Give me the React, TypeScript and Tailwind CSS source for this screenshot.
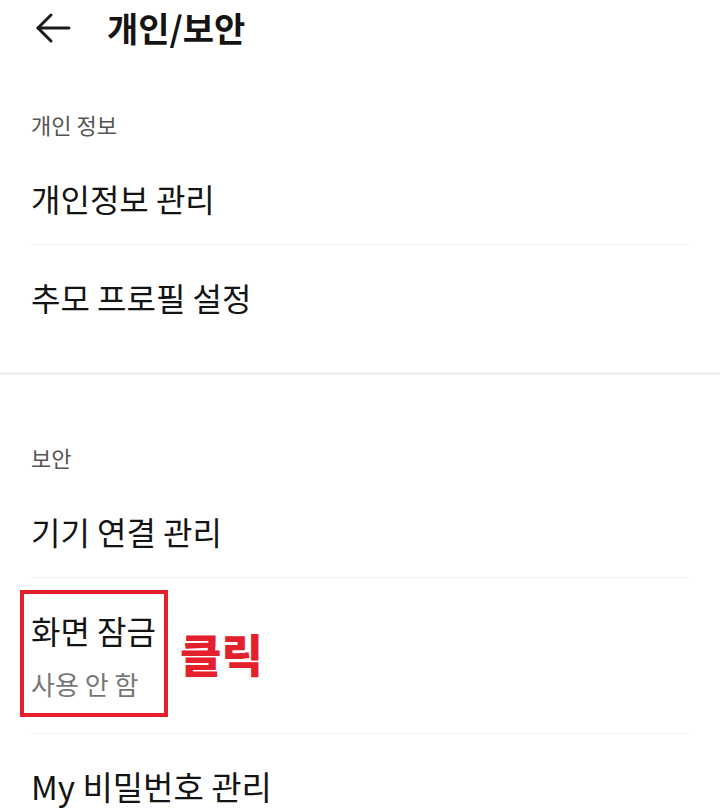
import React from 'react';

const font = { fontFamily: '"Noto Sans CJK KR", "Noto Sans", sans-serif' };

const BackArrow = () => (
  <svg width="36" height="32" viewBox="0 0 36 32" fill="none" stroke="#1a1a1a" strokeWidth="3" strokeLinecap="round" strokeLinejoin="round">
    <path d="M34 16H3" />
    <path d="M16 3L3 16l13 13" />
  </svg>
);

const SectionLabel = ({ children, top }: { children: React.ReactNode; top: string }) => (
  <div className={`px-[31px] ${top} pb-[8px] text-[22px] leading-[28px] text-[#555]`}>{children}</div>
);

const Row = ({ children, size = 'text-[32px]' }: { children: React.ReactNode; size?: string }) => (
  <div className={`px-[31px] pt-[32px] pb-[26px] ${size} leading-[40px] text-[#141414]`}>{children}</div>
);

const Divider = () => <div className="ml-[31px] mr-[30px] h-px bg-[#f2f2f2]" />;

export default function App() {
  return (
    <div className="w-[720px] h-[809px] overflow-hidden bg-white" style={font}>
      {/* top bar */}
      <div className="h-[56px] flex items-center pl-[35px]">
        <BackArrow />
        <h1 className="ml-[36px] text-[34px] font-bold leading-[40px] text-[#141414]">개인/보안</h1>
      </div>

      <SectionLabel top="pt-[54px]">개인 정보</SectionLabel>
      <Row>개인정보 관리</Row>
      <Divider />
      <Row>추모 프로필 설정</Row>

      <div className="mt-[29px] h-[3px] bg-[#efefef]" />

      <SectionLabel top="pt-[68px]">보안</SectionLabel>
      <Row>기기 연결 관리</Row>
      <Divider />

      {/* screen lock, highlighted */}
      <div className="pl-[20px] pt-[12px] pb-[16px] flex items-center">
        <div className="w-[148px] border-4 border-[#e3202b] pl-[7px] pt-[16px] pb-[15px]">
          <div className="text-[32px] leading-[40px] text-[#141414]">화면 잠금</div>
          <div className="mt-[20px] text-[26px] leading-[28px] text-[#777]">사용 안 함</div>
        </div>
        <span className="ml-[12px] text-[45px] font-black leading-[48px] text-[#e3202b]">클릭</span>
      </div>
      <Divider />

      <Row size="text-[33px]">My 비밀번호 관리</Row>
    </div>
  );
}
